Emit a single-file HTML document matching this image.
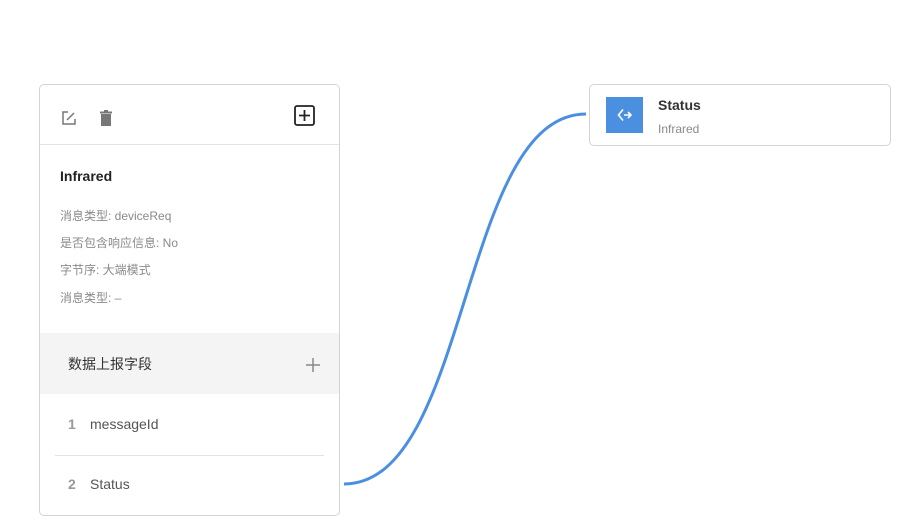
<!DOCTYPE html>
<html><head><meta charset="utf-8"><style>
*{margin:0;padding:0;box-sizing:border-box}
body{width:912px;height:531px;background:#fff;position:relative;overflow:hidden;font-family:"Liberation Sans","Noto Sans CJK SC",sans-serif}
.card{position:absolute;left:39px;top:84px;width:301px;height:432px;border:1px solid #d4d4d4;border-radius:5px;overflow:hidden;background:#fff}
.hdr{height:60px;border-bottom:1px solid #e3e3e3;position:relative}
.info{position:absolute;left:20px;font-size:12px;color:#8a8a8a}
.grey{position:absolute;left:0;top:248px;width:100%;height:61px;background:#f4f4f4}
.row{position:absolute;left:28px;font-size:14px;color:#555}
.row b{color:#999;font-weight:bold;display:inline-block;width:22px}
</style></head><body>
<svg width="912" height="531" style="position:absolute;left:0;top:0">
<path d="M344 484 C470 484 460 114 586 114" fill="none" stroke="#4a8fe0" stroke-width="3"/>
</svg>
<div class="card">
 <div class="hdr">
  <svg style="position:absolute;left:21px;top:25px" width="16" height="16" viewBox="0 0 16 16"><path d="M7 2H2v12h12V9" fill="none" stroke="#777" stroke-width="1.5"/><path d="M6 10L13 3" stroke="#777" stroke-width="1.5"/></svg>
  <svg style="position:absolute;left:59px;top:25px" width="14" height="16" viewBox="0 0 14 16"><rect x="2" y="4" width="10" height="12" fill="#777"/><rect x="1" y="1.5" width="12" height="2" fill="#777"/><rect x="5" y="0" width="4" height="2" fill="#777"/></svg>
  <svg style="position:absolute;left:254px;top:20px" width="21" height="21" viewBox="0 0 21 21"><rect x="1" y="1" width="19" height="19" rx="2" fill="none" stroke="#222" stroke-width="1.8"/><path d="M10.5 5v11M5 10.5h11" stroke="#222" stroke-width="1.8"/></svg>
 </div>
 <div style="position:absolute;left:20px;top:83px;font-size:14px;font-weight:bold;color:#222">Infrared</div>
 <div class="info" style="top:122px">消息类型: deviceReq</div>
 <div class="info" style="top:149px">是否包含响应信息: No</div>
 <div class="info" style="top:176px">字节序: 大端模式</div>
 <div class="info" style="top:204px">消息类型: –</div>
 <div class="grey">
  <div style="position:absolute;left:28px;top:21px;font-size:14px;color:#333">数据上报字段</div>
  <svg style="position:absolute;left:265px;top:24px" width="16" height="16"><path d="M8 1v14M1 8h14" stroke="#888" stroke-width="1.5"/></svg>
 </div>
 <div class="row" style="top:331px"><b>1</b>messageId</div>
 <div style="position:absolute;left:15px;top:370px;width:269px;height:1px;background:#e3e3e3"></div>
 <div class="row" style="top:391px"><b>2</b>Status</div>
</div>
<div style="position:absolute;left:589px;top:84px;width:302px;height:62px;border:1px solid #d4d4d4;border-radius:5px;background:#fff">
 <div style="position:absolute;left:16px;top:12px;width:37px;height:36px;background:#4a8fe0">
  <svg style="position:absolute;left:11px;top:11px" width="15" height="14" viewBox="0 0 15 14"><path d="M6 1.5L1.5 7L6 12.5" fill="none" stroke="#fff" stroke-width="1.6"/><path d="M7 7h7M11 4l3 3-3 3" fill="none" stroke="#fff" stroke-width="1.6"/></svg>
 </div>
 <div style="position:absolute;left:68px;top:12px;font-size:14px;font-weight:bold;color:#333">Status</div>
 <div style="position:absolute;left:68px;top:37px;font-size:12px;color:#8a8a8a">Infrared</div>
</div>
</body></html>
